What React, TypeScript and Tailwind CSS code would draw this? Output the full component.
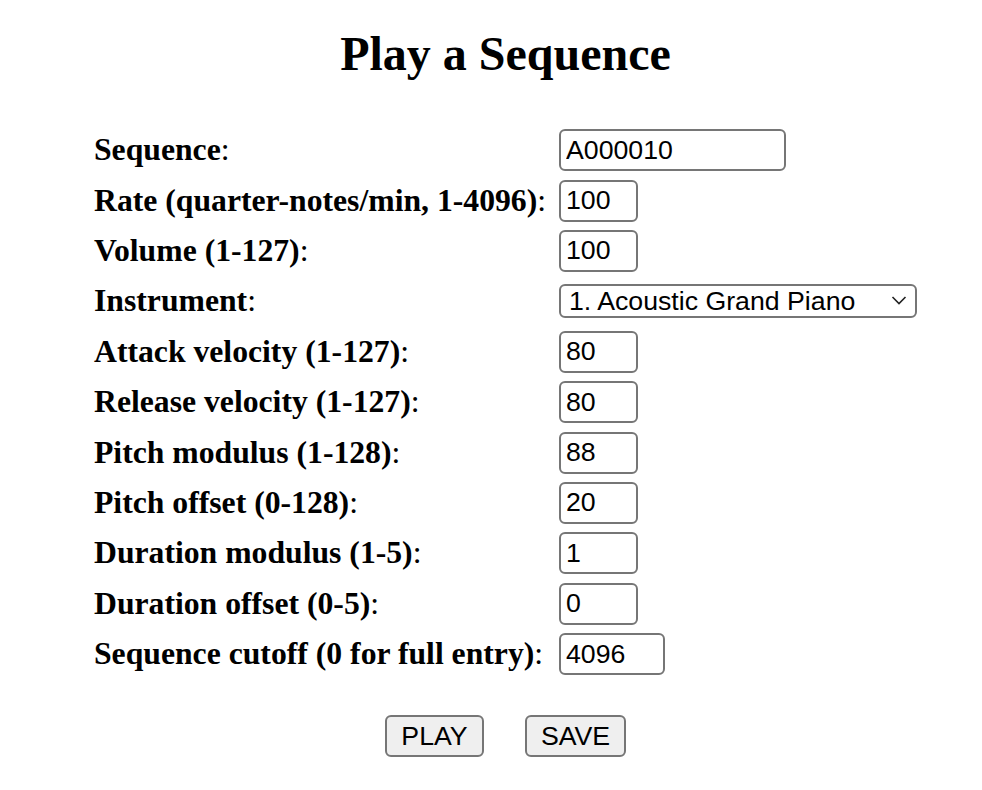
import React from "react";

const rows: { label: string; value: string; width: string; kind?: "select" }[] = [
  { label: "Sequence", value: "A000010", width: "w-[227px]" },
  { label: "Rate (quarter-notes/min, 1-4096)", value: "100", width: "w-[79px]" },
  { label: "Volume (1-127)", value: "100", width: "w-[79px]" },
  { label: "Instrument", value: "1. Acoustic Grand Piano", width: "w-[358px]", kind: "select" },
  { label: "Attack velocity (1-127)", value: "80", width: "w-[79px]" },
  { label: "Release velocity (1-127)", value: "80", width: "w-[79px]" },
  { label: "Pitch modulus (1-128)", value: "88", width: "w-[79px]" },
  { label: "Pitch offset (0-128)", value: "20", width: "w-[79px]" },
  { label: "Duration modulus (1-5)", value: "1", width: "w-[79px]" },
  { label: "Duration offset (0-5)", value: "0", width: "w-[79px]" },
  { label: "Sequence cutoff (0 for full entry)", value: "4096", width: "w-[106px]" },
];

export default function App() {
  return (
    <div className="min-h-[790px] w-full bg-white text-black pl-[29px] font-['Liberation_Serif',serif]">
      <h1 className="pt-[27px] text-center text-[48px] font-bold leading-[53px]">Play a Sequence</h1>
      <div className="mt-[45px] flex flex-col pl-[65px]">
        {rows.map((r) => (
          <div key={r.label} className="flex h-[50.4px] items-center">
            <div className="w-[465px] text-[31.7px] leading-[36px] whitespace-nowrap">
              <span className="font-bold">{r.label}</span>:
            </div>
            {r.kind === "select" ? (
              <div className="relative">
                <select
                  defaultValue={r.value}
                  className={`${r.width} h-[34px] appearance-none rounded-[6px] border-2 border-[#767676] bg-white pl-[8px] text-[26.7px] leading-[30px] text-black font-['Liberation_Sans',Arial,sans-serif] outline-none`}
                >
                  <option>{r.value}</option>
                </select>
                <svg
                  className="pointer-events-none absolute right-[10px] top-[10px]"
                  width="16"
                  height="12"
                  viewBox="0 0 16 12"
                  fill="none"
                >
                  <path d="M1.5 3 L8 9.5 L14.5 3" stroke="#222" strokeWidth="1.6" />
                </svg>
              </div>
            ) : (
              <input
                type="text"
                defaultValue={r.value}
                className={`${r.width} h-[42px] rounded-[6px] border-2 border-[#767676] bg-white pl-[5px] text-[26.7px] leading-[30px] text-black font-['Liberation_Sans',Arial,sans-serif] outline-none`}
              />
            )}
          </div>
        ))}
      </div>
      <div className="mt-[36px] flex justify-center gap-[41px] font-['Liberation_Sans',Arial,sans-serif]">
        <button className="h-[42px] w-[99px] rounded-[6px] border-2 border-[#767676] bg-[#efefef] text-[26.7px] leading-[30px] text-black">
          PLAY
        </button>
        <button className="h-[42px] w-[101px] rounded-[6px] border-2 border-[#767676] bg-[#efefef] text-[26.7px] leading-[30px] text-black">
          SAVE
        </button>
      </div>
    </div>
  );
}
